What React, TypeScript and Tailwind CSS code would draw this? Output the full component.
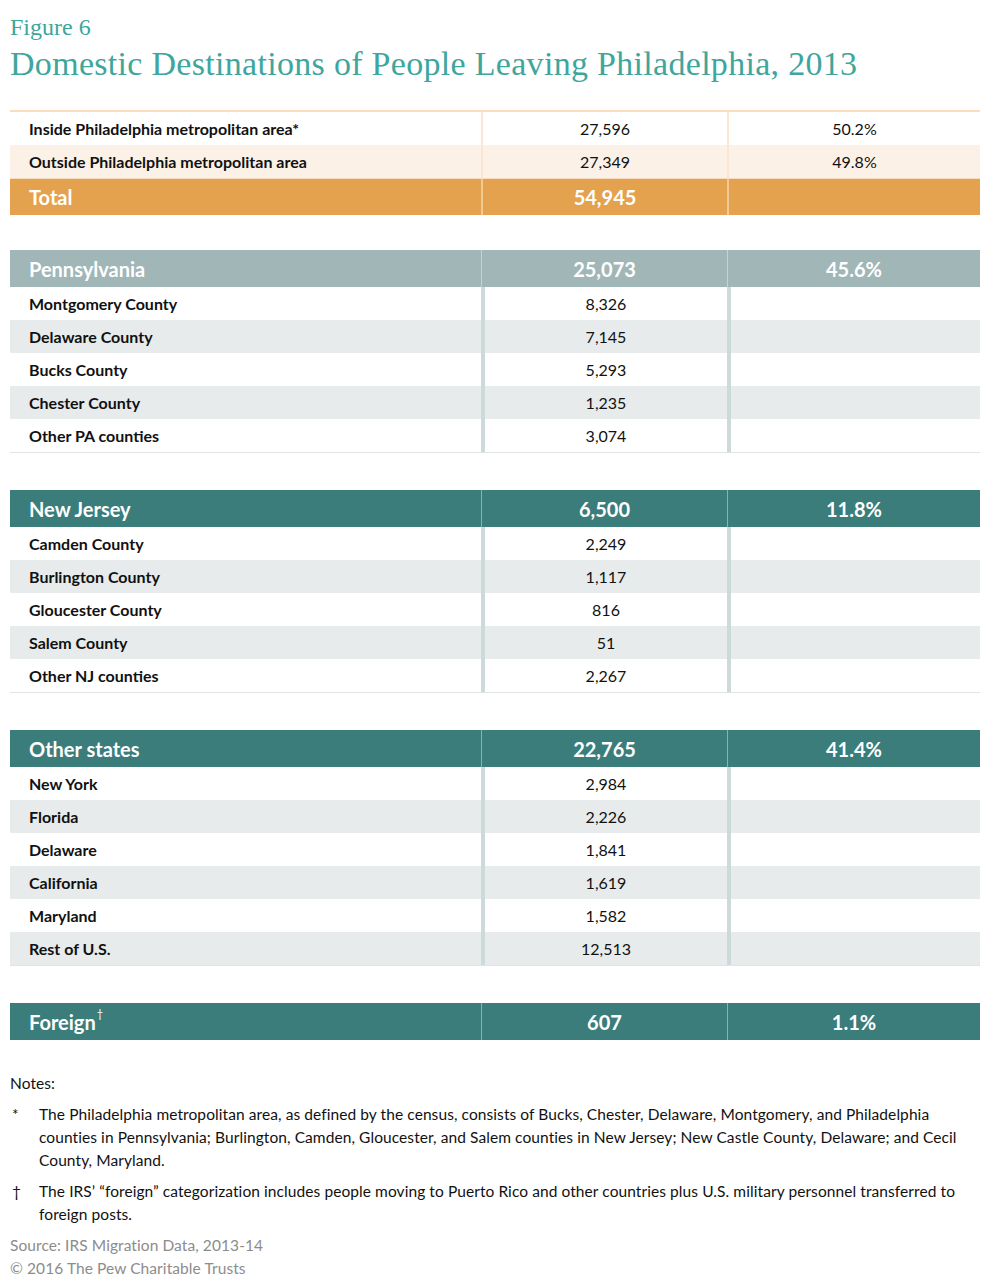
import React from "react";

type Row = { label: string; value: string; pct?: string };

const sans = "font-['Lato','Open_Sans',sans-serif]";

const sections: { title: string; total: string; pct: string; tone: "gray" | "teal"; rows: Row[] }[] = [
  {
    title: "Pennsylvania",
    total: "25,073",
    pct: "45.6%",
    tone: "gray",
    rows: [
      { label: "Montgomery County", value: "8,326" },
      { label: "Delaware County", value: "7,145" },
      { label: "Bucks County", value: "5,293" },
      { label: "Chester County", value: "1,235" },
      { label: "Other PA counties", value: "3,074" },
    ],
  },
  {
    title: "New Jersey",
    total: "6,500",
    pct: "11.8%",
    tone: "teal",
    rows: [
      { label: "Camden County", value: "2,249" },
      { label: "Burlington County", value: "1,117" },
      { label: "Gloucester County", value: "816" },
      { label: "Salem County", value: "51" },
      { label: "Other NJ counties", value: "2,267" },
    ],
  },
  {
    title: "Other states",
    total: "22,765",
    pct: "41.4%",
    tone: "teal",
    rows: [
      { label: "New York", value: "2,984" },
      { label: "Florida", value: "2,226" },
      { label: "Delaware", value: "1,841" },
      { label: "California", value: "1,619" },
      { label: "Maryland", value: "1,582" },
      { label: "Rest of U.S.", value: "12,513" },
    ],
  },
];

function HeaderRow({ title, total, pct, tone, sup }: { title: string; total: string; pct: string; tone: "gray" | "teal"; sup?: string }) {
  const bg = tone === "gray" ? "bg-[#a0b6b7]" : "bg-[#3a7d7b]";
  return (
    <div className={`grid grid-cols-[471px_246px_253px] h-[37px] ${bg} text-white text-[20px] font-bold`}>
      <div className="flex items-center pl-[19px]">
        {title}
        {sup && <sup className="text-[11px] font-normal ml-[1px] -mt-[4px]">{sup}</sup>}
      </div>
      <div className="flex items-center justify-center border-l border-white/40">{total}</div>
      <div className="flex items-center justify-center border-l border-white/40">{pct}</div>
    </div>
  );
}

function Section({ title, total, pct, tone, rows }: (typeof sections)[number]) {
  return (
    <div>
      <HeaderRow title={title} total={total} pct={pct} tone={tone} />
      <div className="border-b border-[#dfe5e5]">
        {rows.map((r, i) => (
          <div
            key={r.label}
            className={`grid grid-cols-[471px_246px_253px] h-[33px] text-[16px] text-[#111] ${i % 2 === 1 ? "bg-[#e7ebeb]" : "bg-white"}`}
          >
            <div className="flex items-center pl-[19px] font-bold">{r.label}</div>
            <div className="flex items-center justify-center border-l-4 border-[#cddada]">{r.value}</div>
            <div className="border-l-4 border-[#cddada]" />
          </div>
        ))}
      </div>
    </div>
  );
}

export default function App() {
  return (
    <div className={`w-[990px] h-[1286px] bg-white px-[10px] pt-[12px] ${sans}`}>
      <div className="font-['Liberation_Serif',serif] text-[#3ea69c]">
        <div className="text-[24px] leading-[30px]">Figure 6</div>
        <div className="text-[34px] leading-[40px] mt-[2px] tracking-[0.3px]">
          Domestic Destinations of People Leaving Philadelphia, 2013
        </div>
      </div>

      {/* metro split */}
      <div className="mt-[26px] border-t-2 border-[#fbdcbc] text-[16px] text-[#111]">
        <div className="grid grid-cols-[471px_246px_253px] h-[33px] bg-white">
          <div className="flex items-center pl-[19px] font-bold">Inside Philadelphia metropolitan area*</div>
          <div className="flex items-center justify-center border-l-2 border-[#fbe6d2]">27,596</div>
          <div className="flex items-center justify-center border-l-2 border-[#fbe6d2]">50.2%</div>
        </div>
        <div className="grid grid-cols-[471px_246px_253px] h-[33px] bg-[#fcf1e7]">
          <div className="flex items-center pl-[19px] font-bold">Outside Philadelphia metropolitan area</div>
          <div className="flex items-center justify-center border-l-2 border-[#fbe6d2]">27,349</div>
          <div className="flex items-center justify-center border-l-2 border-[#fbe6d2]">49.8%</div>
        </div>
        <div className="grid grid-cols-[471px_246px_253px] h-[37px] bg-[#e4a24f] text-white text-[20px] font-bold border-t border-[#f3dcc0]">
          <div className="flex items-center pl-[19px]">Total</div>
          <div className="flex items-center justify-center border-l-2 border-[#f0c995]">54,945</div>
          <div className="border-l-2 border-[#f0c995]" />
        </div>
      </div>

      <div className="mt-[35px] flex flex-col gap-[37px]">
        {sections.map((s) => (
          <Section key={s.title} {...s} />
        ))}
        <HeaderRow title="Foreign" sup="†" total="607" pct="1.1%" tone="teal" />
      </div>

      {/* notes */}
      <div className="mt-[32px] text-[15.5px] leading-[23px] text-[#111] whitespace-nowrap tracking-[0.08px]">
        <div>Notes:</div>
        <div className="flex mt-[8px]">
          <span className="w-[29px] shrink-0 pl-[2px]">*</span>
          <p>
            The Philadelphia metropolitan area, as defined by the census, consists of Bucks, Chester, Delaware, Montgomery, and Philadelphia
            <br />
            counties in Pennsylvania; Burlington, Camden, Gloucester, and Salem counties in New Jersey; New Castle County, Delaware; and Cecil
            <br />
            County, Maryland.
          </p>
        </div>
        <div className="flex mt-[8px]">
          <span className="w-[29px] shrink-0 pl-[2px]">†</span>
          <p>
            The IRS’ “foreign” categorization includes people moving to Puerto Rico and other countries plus U.S. military personnel transferred to
            <br />
            foreign posts.
          </p>
        </div>
        <div className="mt-[8px] text-[#8c8c8c]">
          <div>Source: IRS Migration Data, 2013-14</div>
          <div>© 2016 The Pew Charitable Trusts</div>
        </div>
      </div>
    </div>
  );
}
